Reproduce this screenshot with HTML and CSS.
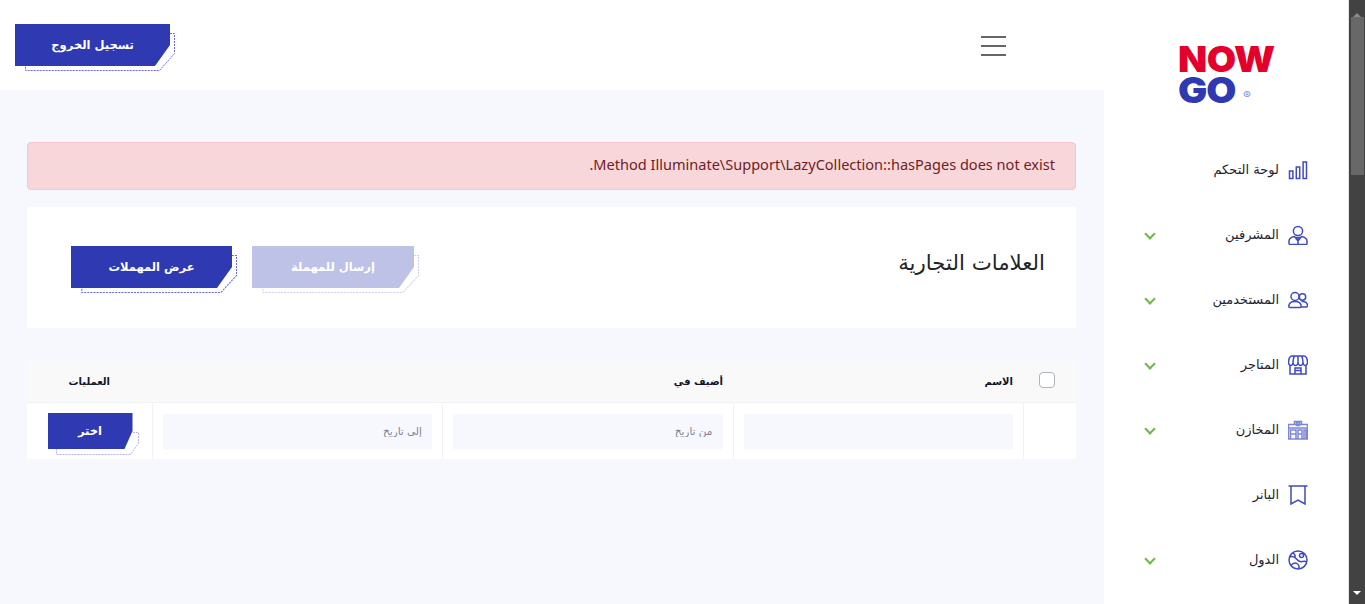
FILE: index.html
```html
<!DOCTYPE html>
<html lang="ar" dir="rtl">
<head>
    <meta charset="UTF-8">
    <title>العلامات التجارية</title>
    <link rel="stylesheet" href="styles.css">
</head>
<body>
    <!-- Fake scrollbar, the window shows it on the far right -->
    <div class="scrollbar">
        <span class="arrow-up"></span>
        <span class="thumb"></span>
        <span class="arrow-down"></span>
    </div>

    <aside class="sidebar">
        <div class="logo">
            <div class="logo-now">NOW</div>
            <div class="logo-go">GO<span class="logo-reg">®</span></div>
        </div>
        <nav class="menu">
            <a class="menu-item">
                <svg class="menu-icon" viewBox="0 0 20 20"><path d="M1.500 11h3.400v7.500H1.500zM8.300 7h3.400v11.500H8.300zM15.100 2h3.400v16.500h-3.400z"/></svg>
                <span>لوحة التحكم</span>
            </a>
            <a class="menu-item has-sub">
                <svg class="menu-icon" viewBox="0 0 20 20"><circle cx="10" cy="6" r="4.600"/><path d="M1 19.500h18M1 19.500v-3.500c0-2.500 3-4 5.500-4.500L10 16l3.500-4.500c2.500.5 5.500 2 5.500 4.500v3.500M10 16v3.500M8.500 12.500h3L10 16z"/></svg>
                <span>المشرفين</span>
            </a>
            <a class="menu-item has-sub">
                <svg class="menu-icon" viewBox="0 0 20 20"><circle cx="7" cy="6.500" r="4"/><circle cx="14.500" cy="7" r="3.200"/><path d="M.8 16.500c0-3 2.500-5 6.200-5s6.200 2 6.200 5c0 .6-.4 1-1 1H1.800c-.6 0-1-.4-1-1zM13.500 11.500c3.500-.5 6 1.500 6 4 0 1-.5 1.500-1.200 1.500h-4.800"/></svg>
                <span>المستخدمين</span>
            </a>
            <a class="menu-item has-sub">
                <svg class="menu-icon" viewBox="0 0 20 20"><path d="M2 10.500v8.500h16v-8.500M4 1h12c2 0 3.500 3 3.500 6 0 2-1 3.500-2.200 3.500S15 9 15 7.500c0 1.500-1.200 3-2.500 3S10 9 10 7.500c0 1.500-1.200 3-2.500 3S5 9 5 7.500c0 1.500-1.100 3-2.300 3S.5 9 .5 7c0-3 1.500-6 3.500-6zM5 7.500C5 5 5.500 2.500 6.500 1M15 7.500c0-2.500-.5-5-1.500-6.500M10 7.500V1M7 19v-6h6v6M7 15.500h6"/></svg>
                <span>المتاجر</span>
            </a>
            <a class="menu-item has-sub">
                <svg class="menu-icon menu-icon-light" viewBox="0 0 20 20"><path d="M.5 4.500h19V19H.5zM.5 8h19M6.500 4.500V1.500h7v3M8.500 2.500h3v3h-3zM2.500 10h5.500v9H2.500zM10 10h4v9h-4zM16 10h2v9h-2zM2.500 14h5.500M10 14h4"/></svg>
                <span>المخازن</span>
            </a>
            <a class="menu-item">
                <svg class="menu-icon" viewBox="0 0 20 20"><path d="M.5 1h19M3 1v18l7-4 7 4V1"/></svg>
                <span>البانر</span>
            </a>
            <a class="menu-item has-sub">
                <svg class="menu-icon" viewBox="0 0 20 20"><circle cx="10" cy="10" r="9"/><circle cx="13.500" cy="5.500" r="2"/><path d="M1.500 7c3-1 5.500 0 7 2s3.500 3 6 2.500 3.500 0 4 .5M3 15.500c2-2.500 4.500-3 6.500-1.500s2 3 1 5M5 3c1.500 1 2.500 2.500 2 4"/></svg>
                <span>الدول</span>
            </a>
        </nav>
    </aside>

    <div class="content">
        <header class="topbar">
            <button class="menu-toggle"><span></span><span></span><span></span></button>
            <a class="btn">
                <svg class="btn-outline" viewBox="0 0 160 47" preserveAspectRatio="none"><path d="M155 9.500h4.500v20l-15 17H10.500v-5"/></svg>
                <span class="btn-face">تسجيل الخروج</span>
            </a>
        </header>

        <main class="page">
            <div class="alert">Method Illuminate\Support\LazyCollection::hasPages does not exist.</div>

            <section class="title-card">
                <h1>العلامات التجارية</h1>
                <div class="title-actions">
                    <a class="btn btn-wide btn-faded">
                        <svg class="btn-outline" viewBox="0 0 160 47" preserveAspectRatio="none"><path d="M155 9.500h4.500v20l-15 17H10.500v-5"/></svg>
                        <span class="btn-face">إرسال للمهملة</span>
                    </a>
                    <a class="btn btn-wide">
                        <svg class="btn-outline" viewBox="0 0 160 47" preserveAspectRatio="none"><path d="M155 9.500h4.500v20l-15 17H10.500v-5"/></svg>
                        <span class="btn-face">عرض المهملات</span>
                    </a>
                </div>
            </section>

            <table class="data-table">
                <thead>
                    <tr>
                        <th class="col-check"><span class="checkbox"></span></th>
                        <th class="col-name">الاسم</th>
                        <th colspan="2">أضيف في</th>
                        <th class="col-ops">العمليات</th>
                    </tr>
                </thead>
                <tbody>
                    <tr>
                        <td></td>
                        <td><input class="field" type="text"></td>
                        <td><input class="field" type="text" placeholder="من تاريخ"></td>
                        <td><input class="field" type="text" placeholder="إلى تاريخ"></td>
                        <td>
                            <a class="btn btn-small">
                                <svg class="btn-outline" viewBox="0 0 91 42" preserveAspectRatio="none"><path d="M85 19.500h5.500V30l-8 11.500H8.500v-6"/></svg>
                                <span class="btn-face">اختر</span>
                            </a>
                        </td>
                    </tr>
                </tbody>
            </table>
        </main>
    </div>
</body>
</html>
```
FILE: styles.css
```css
html, body {
    height: 100%;
    overflow: hidden;
}
body {
    margin: 0;
    display: flex;
    background-color: #f7f8fd;
    color: #212529;
    font-family: "DejaVu Sans", "Noto Sans", sans-serif;
    font-size: 14px;
}
a {
    text-decoration: none;
    color: inherit;
}

/* Scrollbar */
.scrollbar {
    flex: 0 0 16px;
    display: flex;
    flex-direction: column;
    align-items: center;
    background-color: #424242;
}
.arrow-up, .arrow-down {
    width: 0;
    box-sizing: border-box;
    border-left: 4px solid transparent;
    border-right: 4px solid transparent;
}
.arrow-up {
    border-bottom: 4px solid #8a8a8a;
    height: 11px;
    flex: 0 0 11px;
    margin: 6px 0 0;
}
.arrow-down {
    border-top: 4px solid #fff;
    height: 8px;
    flex: 0 0 8px;
    margin: auto 0 5px;
}
.thumb {
    width: 13px;
    height: 158px;
    background-color: #686868;
}

/* Sidebar */
.sidebar {
    flex: 0 0 245px;
    box-sizing: border-box;
    height: 604px;
    background-color: #fff;
    border-right: 1px solid #e3e4ea;
}
.logo {
    direction: ltr;
    width: 95px;
    margin: 46px 75px 0 0;
    height: 57px;
    font-family: Inter, "Liberation Sans", sans-serif;
    font-weight: 900;
    line-height: 26px;
    font-size: 36px;
}
.logo-now {
    color: #e5002b;
    height: 31px;
    letter-spacing: -0.500px;
    transform: scaleX(1.055);
    transform-origin: left;
}
.logo-go {
    color: #2f39b1;
    letter-spacing: -1px;
    white-space: nowrap;
    transform: scaleX(1.08);
    transform-origin: left;
}
.logo-reg {
    font-size: 11px;
    font-weight: 400;
    color: #8a90d8;
    margin-left: 7px;
    vertical-align: 4px;
}
.menu {
    margin-top: 34px;
    padding-right: 40px;
}
.menu-item {
    display: flex;
    align-items: center;
    gap: 9px;
    height: 65px;
    font-size: 13px;
    color: #1f2330;
    position: relative;
}
.menu-icon {
    width: 20px;
    height: 20px;
    fill: none;
    stroke: #3f4bbf;
    stroke-width: 1.5;
}
.menu-icon-light {
    stroke: #7d85d6;
}
.has-sub::after {
    content: "";
    position: absolute;
    left: 42px;
    top: 28px;
    width: 6px;
    height: 6px;
    border-right: 2px solid #6fb846;
    border-bottom: 2px solid #6fb846;
    transform: rotate(45deg);
}

/* Top bar */
.content {
    flex: 1;
    min-width: 0;
}
.topbar {
    height: 90px;
    box-sizing: border-box;
    display: flex;
    justify-content: space-between;
    align-items: center;
    padding: 0 98px 0 15px;
    background-color: #fff;
}
.menu-toggle {
    width: 25px;
    height: 20px;
    padding: 0;
    border: none;
    background: none;
    display: flex;
    flex-direction: column;
    justify-content: space-between;
    margin-top: 1px;
}
.menu-toggle span {
    display: block;
    height: 2px;
    background-color: #666;
}

/* Buttons */
.btn {
    display: block;
    position: relative;
    width: 155px;
    height: 42px;
}
.btn-face {
    position: relative;
    display: flex;
    align-items: center;
    justify-content: center;
    height: 100%;
    background-color: #2f39b1;
    color: #fff;
    font-weight: 700;
    font-size: 11.500px;
    clip-path: polygon(0 0, 100% 0, 100% 50%, calc(100% - 15px) 100%, 0 100%);
}
.btn-outline {
    position: absolute;
    left: 0;
    top: 0;
    width: calc(100% + 5px);
    height: calc(100% + 5px);
    fill: none;
    stroke: #6a6ae6;
    stroke-width: 1;
    stroke-dasharray: 2 1;
    vector-effect: non-scaling-stroke;
}
.btn-wide {
    width: 161px;
}
.btn-faded {
    opacity: 0.3;
    width: 162px;
}
.btn-small {
    width: 85px;
    height: 36px;
}
.btn-small .btn-face {
    clip-path: polygon(0 0, 100% 0, 100% 50%, calc(100% - 8px) 100%, 0 100%);
}
.btn-small .btn-outline {
    width: calc(100% + 6px);
    height: calc(100% + 6px);
    stroke: #b4b4ee;
}

/* Page */
.page {
    padding: 52px 28px 0 27px;
}
.alert {
    height: 48px;
    box-sizing: border-box;
    display: flex;
    align-items: center;
    padding: 0 20px 4px;
    background-color: #f8d7da;
    border: 1px solid #f5c6cb;
    border-radius: 4px;
    color: #721c24;
    font-family: "Noto Sans", sans-serif;
    font-size: 14.560px;
}
.title-card {
    height: 121px;
    box-sizing: border-box;
    margin-top: 17px;
    padding: 0 31px 0 44px;
    display: flex;
    justify-content: space-between;
    align-items: center;
    background-color: #fff;
}
.title-card h1 {
    margin: 0 0 10px;
    font-size: 21.300px;
    font-weight: 400;
    color: #212529;
}
.title-actions {
    display: flex;
    gap: 20px;
    margin-bottom: 1px;
}

/* Table */
.data-table {
    width: 100%;
    margin-top: 32px;
    border-collapse: collapse;
    table-layout: fixed;
    background-color: #fff;
}
.data-table th {
    height: 42px;
    padding: 0 10px;
    background-color: #f9f9f9;
    border-bottom: 1px solid #f1f2f6;
    text-align: right;
    font-size: 10px;
    font-weight: 700;
    color: #12162a;
}
.data-table th.col-ops {
    padding-right: 42px;
}
.data-table td {
    height: 56px;
    padding: 0 10px;
    border-left: 1px solid #f1f2f6;
}
.data-table td:last-child {
    border-left: none;
    padding: 0 19px 0 20px;
}
.col-check {
    width: 33px;
}
.col-name {
    width: 270px;
}
.col-ops {
    width: 125px;
    box-sizing: border-box;
}
.checkbox {
    display: block;
    width: 14px;
    height: 14px;
    margin-right: 11px;
    margin-top: -2px;
    background-color: #fff;
    border: 1px solid #adb5bd;
    border-radius: 4px;
}
.field {
    display: block;
    box-sizing: border-box;
    width: 100%;
    height: 35px;
    padding: 0 10px;
    border: none;
    background-color: #f7f8fd;
    font-family: inherit;
    font-size: 10.500px;
}
.field::placeholder {
    color: #7d8594;
}
```
